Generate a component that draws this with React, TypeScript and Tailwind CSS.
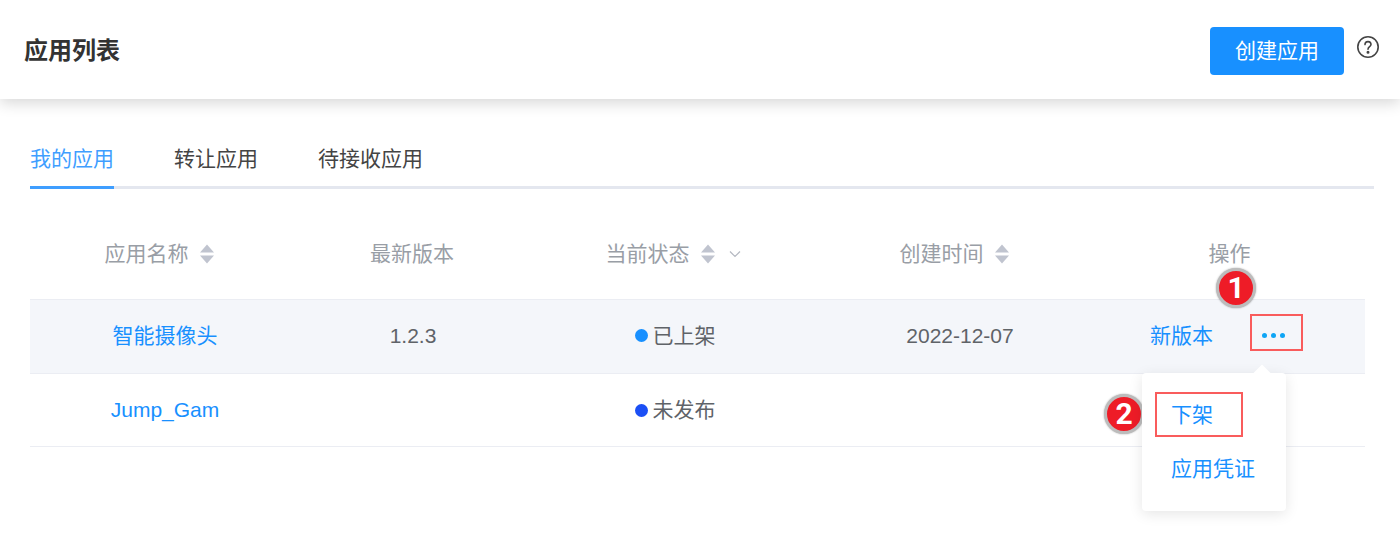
const fontStack = "font-['Liberation_Sans','Noto_Sans_CJK_SC',sans-serif]";

function SortIcon() {
  return (
    <svg width="14" height="20" viewBox="0 0 14 20" className="ml-[11px] shrink-0">
      <path d="M7 0.5 L14 8.5 L0 8.5 Z" fill="#c0c4cf" />
      <path d="M0 11.5 L14 11.5 L7 19.5 Z" fill="#c0c4cf" />
    </svg>
  );
}

function Badge({ n, className }: { n: number; className: string }) {
  return (
    <div
      className={`absolute flex h-10 w-10 items-center justify-center rounded-full border-[3px] border-[#bcbcbc] bg-[#ee1c27] font-['Roboto',sans-serif] text-[30px] leading-none font-bold text-white shadow-[0_0_2px_rgba(0,0,0,0.35)] ${className}`}
    >
      {n}
    </div>
  );
}

const cols = "grid grid-cols-[270px_226px_298px_272px_269px] items-center text-center";

export default function App() {
  return (
    <div className={`relative h-[535px] w-[1400px] overflow-hidden bg-white ${fontStack}`}>
      <header className="flex h-[99px] items-center justify-between bg-white pr-[20px] pl-6 shadow-[0_4px_14px_rgba(0,0,0,0.16)]">
        <h1 className="mt-[2px] text-2xl leading-8 font-bold text-[#333]">应用列表</h1>
        <div className="flex items-start">
          <button className="mt-[3px] h-12 w-[134px] rounded bg-[#1890ff] text-[21px] text-white">
            创建应用
          </button>
          <svg width="24" height="24" viewBox="0 0 24 24" className="mt-[11px] ml-[12px]" fill="none" stroke="#444" strokeWidth="1.6">
            <circle cx="12" cy="12" r="10.2" />
            <path d="M9 9.6a3 3 0 0 1 6 0c0 2-3 2.3-3 4.6" strokeLinecap="round" />
            <circle cx="12" cy="17.2" r="0.7" fill="#444" stroke="#444" />
          </svg>
        </div>
      </header>

      <main className="px-[30px]">
        <nav className="mt-[39px] mr-[-4px] flex w-[1344px] gap-[60px] border-b-[3px] border-[#e4e7ef] text-[21px] text-[#444]">
          <div className="relative h-[48px] leading-[42px] text-[#3f9eff]">
            我的应用
            <div className="absolute right-0 bottom-[-3px] left-0 h-[3px] bg-[#3f9eff]" />
          </div>
          <div className="leading-[42px]">转让应用</div>
          <div className="leading-[42px]">待接收应用</div>
        </nav>

        <div className="mt-[29px] w-[1335px] text-[21px]">
          <div className={`${cols} h-[81px] pb-[10px] text-[#999ea6]`}>
            <div className="flex items-center justify-center pr-[12px]">
              应用名称
              <SortIcon />
            </div>
            <div className="pr-[2px]">最新版本</div>
            <div className="flex items-center justify-center pr-[4px]">
              当前状态
              <SortIcon />
              <svg width="12" height="8" viewBox="0 0 12 8" className="ml-[14px]" fill="none" stroke="#b5b9c2" strokeWidth="1.2">
                <path d="M1 1.5 L6 6.5 L11 1.5" />
              </svg>
            </div>
            <div className="flex items-center justify-center pr-[12px]">
              创建时间
              <SortIcon />
            </div>
            <div className="pr-[2px]">操作</div>
          </div>

          <div className={`${cols} h-[75px] border-y border-[#ebedf3] bg-[#f4f6fa] pb-[2px] text-[#5f6368]`}>
            <div className="text-[#1890ff]">智能摄像头</div>
            <div>1.2.3</div>
            <div className="flex items-center justify-center">
              <span className="mr-[5px] h-[13px] w-[13px] rounded-full bg-[#1890ff]" />
              已上架
            </div>
            <div>2022-12-07</div>
            <div className="flex items-center justify-start pl-[54px] text-[#1890ff]">
              新版本
              <div className="mt-[-6px] ml-[37px] flex h-[37px] w-[53px] items-center justify-center gap-[4px] border-2 border-[#f95c5c] pt-[5px] pr-[6px]">
                <span className="h-[5px] w-[5px] rounded-full bg-[#0ea5f5]" />
                <span className="h-[5px] w-[5px] rounded-full bg-[#0ea5f5]" />
                <span className="h-[5px] w-[5px] rounded-full bg-[#0ea5f5]" />
              </div>
            </div>
          </div>

          <div className={`${cols} h-[73px] border-b border-[#ebedf3] text-[#5f6368]`}>
            <div className="text-[#1890ff]">Jump_Gam</div>
            <div />
            <div className="flex items-center justify-center">
              <span className="mr-[5px] h-[13px] w-[13px] rounded-full bg-[#1b4ff5]" />
              未发布
            </div>
            <div />
            <div />
          </div>
        </div>
      </main>

      <Badge n={1} className="top-[268px] left-[1216px]" />
      <Badge n={2} className="top-[394px] left-[1104px]" />

      <div className="absolute top-[373px] left-[1142px] h-[138px] w-[144px] rounded bg-white text-[21px] text-[#1890ff] shadow-[0_3px_14px_rgba(0,0,0,0.1)]">
        <div className="absolute top-[-6px] left-[114px] h-[12px] w-[12px] rotate-45 bg-white" />
        <div className="absolute top-[19px] left-[13px] h-[45px] w-[88px] border-2 border-[#f95c5c] pl-[14px] leading-[41px]">
          下架
        </div>
        <div className="absolute top-[80px] left-[29px] leading-8">应用凭证</div>
      </div>
    </div>
  );
}
